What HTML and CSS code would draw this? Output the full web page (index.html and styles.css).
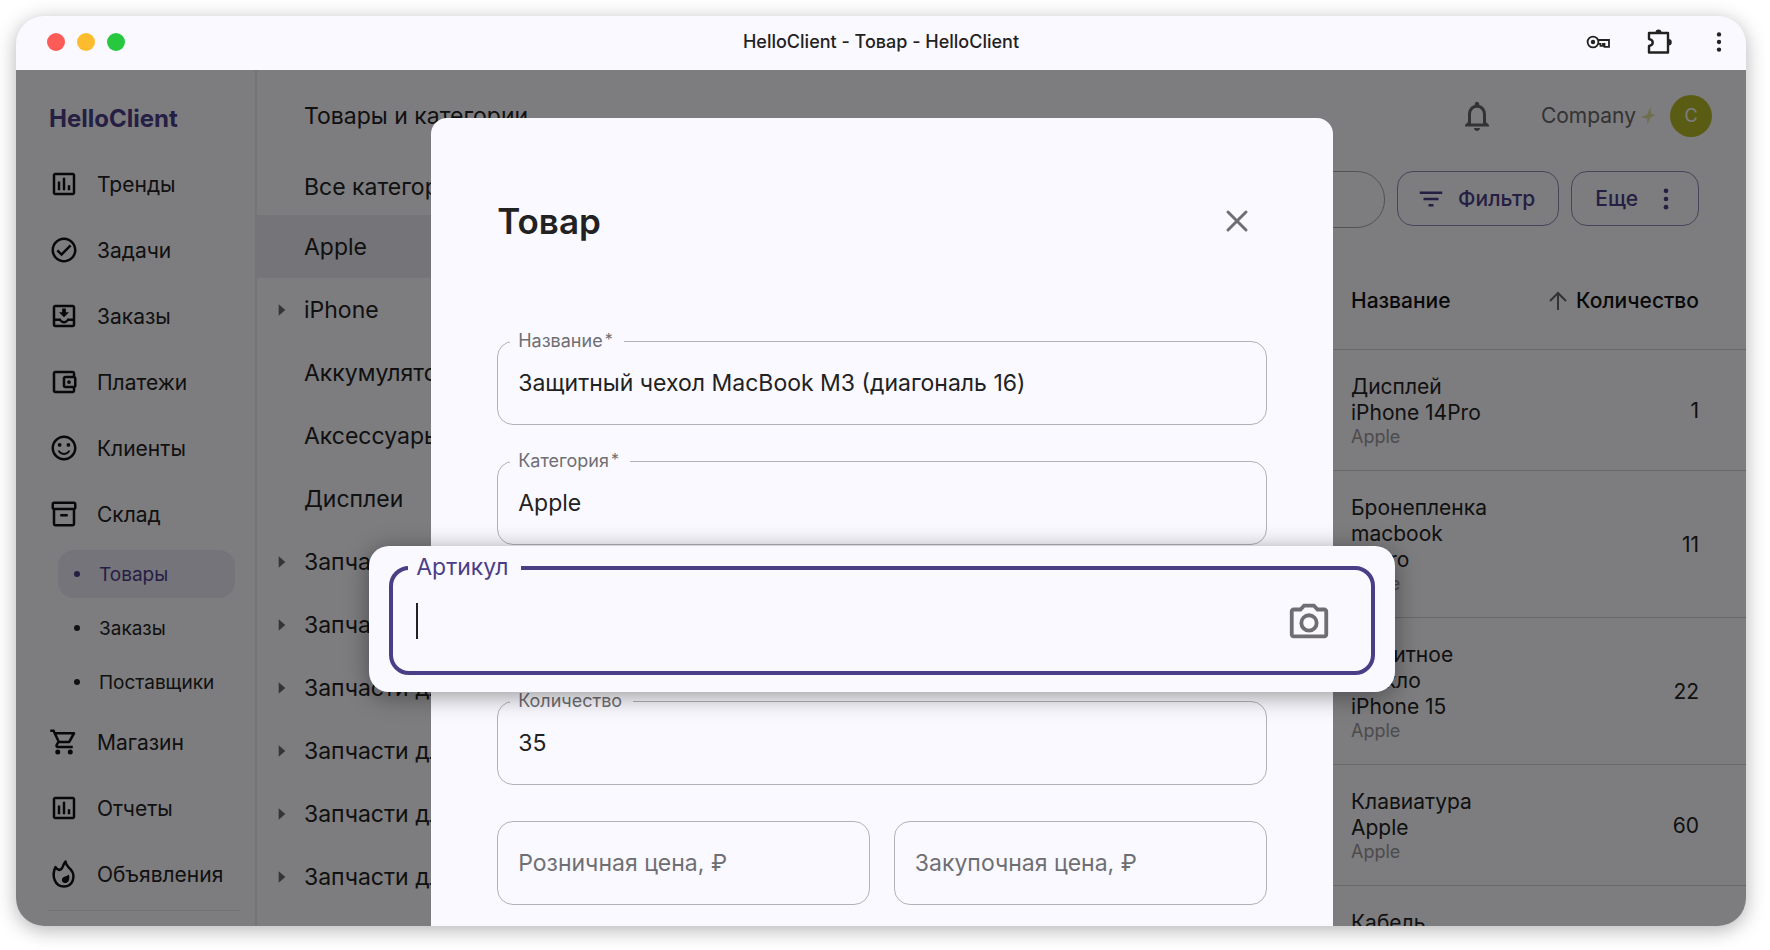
FILE: index.html
```html
<!DOCTYPE html>
<html lang="ru">

<head>
    <meta charset="UTF-8">
    <meta name="viewport" content="width=device-width, initial-scale=1.0">
    <title>HelloClient - Товар - HelloClient</title>
    <link rel="stylesheet" href="styles.css">
</head>

<body>
    <!-- общие иконки -->
    <svg width="0" height="0" class="sprite">
        <symbol id="i-chart" viewBox="0 0 24 24"><path d="M9 17H7v-7h2v7zm4 0h-2V7h2v10zm4 0h-2v-4h2v4zm2 2H5V5h14v14zm0-16H5c-1.1 0-2 .9-2 2v14c0 1.1.9 2 2 2h14c1.1 0 2-.9 2-2V5c0-1.1-.9-2-2-2z"/></symbol>
        <symbol id="i-arrow" viewBox="0 0 24 24"><path d="M8 5v14l8-7z"/></symbol>
        <symbol id="i-dots" viewBox="0 0 24 24"><circle cx="12" cy="5" r="2"/><circle cx="12" cy="12" r="2"/><circle cx="12" cy="19" r="2"/></symbol>
    </svg>

    <div class="window">
        <div class="titlebar">
            <div class="lights">
                <span class="light red"></span>
                <span class="light yellow"></span>
                <span class="light green"></span>
            </div>
            <div class="window-title">HelloClient - Товар - HelloClient</div>
            <div class="window-tools">
                <svg class="icon-24" viewBox="0 0 24 24" fill="none" stroke="currentColor" stroke-width="1.8"><circle cx="7" cy="12" r="5.400"/><circle cx="7" cy="12" r="2.200" fill="currentColor" stroke="none"/><path d="M12 10H23v6.800h-4.500v-2.900h-1.500v2h-2.500v-2H12"/></svg>
                <svg class="icon-30" viewBox="0 0 30 30"><path d="M5 6h19v19.500H5v-6.500c5-1 5-6 0-7z" fill="none" stroke="currentColor" stroke-width="2.400" stroke-linejoin="round"/><path d="M11.500 5.500a3 3 0 0 1 6 0zM24.500 12a3 3 0 0 1 0 6.500z" fill="currentColor"/></svg>
                <svg class="icon-26" fill="currentColor"><use href="#i-dots"/></svg>
            </div>
        </div>

        <div class="app">
            <nav class="sidebar">
                <div class="logo">HelloClient</div>
                <a href="#" class="nav-item"><svg class="icon"><use href="#i-chart"/></svg>Тренды</a>
                <a href="#" class="nav-item"><svg class="icon" viewBox="0 0 24 24"><path d="M12 2C6.500 2 2 6.500 2 12s4.500 10 10 10 10-4.500 10-10S17.500 2 12 2zm0 18c-4.400 0-8-3.600-8-8s3.600-8 8-8 8 3.600 8 8-3.600 8-8 8zm4.600-12.400L10 14.200l-2.600-2.600L6 13l4 4 8-8z"/></svg>Задачи</a>
                <a href="#" class="nav-item"><svg class="icon" viewBox="0 0 24 24"><path d="M16 9h-2.500V6h-3v3H8l4 4 4-4zm3-6H5c-1.100 0-2 .9-2 2v14c0 1.100.9 2 2 2h14c1.100 0 2-.9 2-2V5c0-1.100-.9-2-2-2zm0 16H5v-3h3.600c.7 1.200 2 2 3.400 2s2.700-.8 3.400-2H19v3zm0-5h-4.500c0 1.200-1.200 2-2.500 2s-2.500-.8-2.500-2H5V5h14v9z"/></svg>Заказы</a>
                <a href="#" class="nav-item"><svg class="icon" viewBox="0 0 24 24"><path d="M21 7.300V5c0-1.100-.9-2-2-2H5c-1.100 0-2 .9-2 2v14c0 1.100.9 2 2 2h14c1.100 0 2-.9 2-2v-2.300c.6-.3 1-1 1-1.700V9c0-.7-.4-1.400-1-1.700zM20 9v6h-7V9h7zM5 19V5h14v2h-6c-1.100 0-2 .9-2 2v6c0 1.100.9 2 2 2h6v2H5z"/><circle cx="16" cy="12" r="1.500"/></svg>Платежи</a>
                <a href="#" class="nav-item"><svg class="icon" viewBox="0 0 24 24"><path d="M12 2C6.500 2 2 6.500 2 12s4.500 10 10 10 10-4.500 10-10S17.500 2 12 2zm0 18c-4.400 0-8-3.600-8-8s3.600-8 8-8 8 3.600 8 8-3.600 8-8 8z"/><circle cx="8.500" cy="9.500" r="1.500"/><circle cx="15.500" cy="9.500" r="1.500"/><path d="M12 16c-1.500 0-2.800-.8-3.500-2H6.900c.8 2 2.800 3.500 5.100 3.500s4.300-1.500 5.100-3.500h-1.600c-.7 1.200-2 2-3.500 2z"/></svg>Клиенты</a>
                <a href="#" class="nav-item"><svg class="icon" viewBox="0 0 24 24"><path d="M20 2H4c-1 0-2 .9-2 2v3c0 .7.400 1.300 1 1.700V20c0 1.100 1.100 2 2 2h14c.9 0 2-.9 2-2V8.700c.6-.4 1-1 1-1.700V4c0-1.100-1-2-2-2zm-1 18H5V9h14v11zm1-13H4V4h16v3z"/><path d="M9 12h6v2H9z"/></svg>Склад</a>
                <a href="#" class="nav-sub active"><span>Товары</span></a>
                <a href="#" class="nav-sub"><span>Заказы</span></a>
                <a href="#" class="nav-sub"><span>Поставщики</span></a>
                <a href="#" class="nav-item"><svg class="icon" viewBox="0 0 24 24"><path d="M15.600 13c.7 0 1.400-.4 1.700-1l3.600-6.500c.4-.7-.1-1.500-.9-1.500H5.200l-.9-2H1v2h2l3.600 7.600L5.200 14c-.7 1.300.2 3 1.800 3h12v-2H7l1.100-2h7.500zM6.200 6h12.100l-2.800 5h-7L6.200 6z"/><circle cx="7" cy="20" r="2"/><circle cx="17" cy="20" r="2"/></svg>Магазин</a>
                <a href="#" class="nav-item"><svg class="icon"><use href="#i-chart"/></svg>Отчеты</a>
                <a href="#" class="nav-item"><svg class="icon" viewBox="0 0 24 24"><path d="M5.200 6.500C6.500 8.600 8.300 9 9.500 8.300c1.700-1 1.500-3.800 3.700-6.300.3 3.300 2.300 4.300 4.100 6.300 4.500 5.200 1.900 13.700-5.300 13.700S1.700 13.800 5.200 6.500z" fill="none" stroke="#111" stroke-width="2" stroke-linejoin="round"/><path d="M15.800 12.300c-1 1.600-3.500 1.200-4.800 2.600-1.500 1.700-.3 4.300 1.900 4.300 3 0 4.200-3.900 2.900-6.900z"/></svg>Объявления</a>
                <div class="nav-line"></div>
            </nav>

            <section class="categories">
                <h1 class="page-title">Товары и категории</h1>
                <ul class="tree">
                    <li class="tree-head">Все категории</li>
                    <li class="selected">Apple</li>
                    <li><svg class="tree-arrow"><use href="#i-arrow"/></svg>iPhone</li>
                    <li>Аккумуляторы</li>
                    <li>Аксессуары</li>
                    <li>Дисплеи</li>
                    <li><svg class="tree-arrow"><use href="#i-arrow"/></svg>Запчасти для</li>
                    <li><svg class="tree-arrow"><use href="#i-arrow"/></svg>Запчасти для</li>
                    <li><svg class="tree-arrow"><use href="#i-arrow"/></svg>Запчасти для</li>
                    <li><svg class="tree-arrow"><use href="#i-arrow"/></svg>Запчасти для</li>
                    <li><svg class="tree-arrow"><use href="#i-arrow"/></svg>Запчасти для</li>
                    <li><svg class="tree-arrow"><use href="#i-arrow"/></svg>Запчасти для</li>
                </ul>
            </section>

            <main class="stock">
                <header class="topbar">
                    <svg class="bell" viewBox="0 0 24 24"><path d="M12 22c1.100 0 2-.9 2-2h-4c0 1.100.9 2 2 2zm6-6v-5c0-3.100-1.600-5.600-4.500-6.300V4c0-.8-.7-1.500-1.500-1.500s-1.500.7-1.500 1.500v.7C7.600 5.400 6 7.900 6 11v5l-2 2v1h16v-1l-2-2zm-2 1H8v-6c0-2.500 1.500-4.500 4-4.500s4 2 4 4.500v6z"/></svg>
                    <span class="company">Company</span>
                    <svg class="spark" viewBox="0 0 20 24"><path d="M13 1l1 8 5 2-6 3-4 9v-8l-8-1 8-4z"/></svg>
                    <span class="avatar">C</span>
                </header>
                <div class="toolbar">
                    <input type="search" class="search" aria-label="Поиск">
                    <button class="tool-btn"><svg class="filter-icon" viewBox="0 0 24 24"><path d="M10 18h4v-2h-4v2zM3 6v2h18V6H3zm3 7h12v-2H6v2z"/></svg>Фильтр</button>
                    <button class="tool-btn more">Еще<svg class="more-icon"><use href="#i-dots"/></svg></button>
                </div>
                <table class="goods">
                    <thead>
                        <tr>
                            <th class="col-pic"></th>
                            <th class="col-name">Название</th>
                            <th class="col-qty"><span class="sort"><svg class="sort-icon" viewBox="0 0 24 24"><path d="M12 21V4M4 12l8-8 8 8" fill="none" stroke="currentColor" stroke-width="2"/></svg>Количество</span></th>
                        </tr>
                    </thead>
                    <tbody>
                        <tr><td></td><td>Дисплей<br>iPhone 14Pro<small>Apple</small></td><td class="qty">1</td></tr>
                        <tr><td></td><td>Бронепленка<br>macbook<br>M Pro<small>Apple</small></td><td class="qty">11</td></tr>
                        <tr><td></td><td>Защитное<br>стекло<br>iPhone 15<small>Apple</small></td><td class="qty">22</td></tr>
                        <tr><td></td><td>Клавиатура<br>Apple<small>Apple</small></td><td class="qty">60</td></tr>
                        <tr><td></td><td>Кабель</td><td></td></tr>
                    </tbody>
                </table>
            </main>

            <div class="backdrop"></div>

            <form class="modal">
                <div class="modal-head">
                    <h2>Товар</h2>
                    <button type="button" class="close" aria-label="Закрыть"><svg viewBox="0 0 24 24"><path d="M3 3l18 18M21 3L3 21" fill="none" stroke="currentColor" stroke-width="3" stroke-linecap="round"/></svg></button>
                </div>
                <div class="field">
                    <label for="name">Название<sup>*</sup></label>
                    <input id="name" type="text" value="Защитный чехол MacBook M3 (диагональ 16)">
                </div>
                <div class="field">
                    <label for="category">Категория<sup>*</sup></label>
                    <input id="category" type="text" value="Apple">
                </div>
                <div class="field-slot">
                    <div class="sku-card">
                        <div class="sku-field">
                            <label for="sku">Артикул</label>
                            <input id="sku" type="text">
                            <span class="caret"></span>
                            <button type="button" class="scan" aria-label="Сканировать"><svg viewBox="0 0 24 24"><path d="M20 5h-3.200L15 3H9L7.200 5H4c-1.100 0-2 .9-2 2v12c0 1.100.9 2 2 2h16c1.100 0 2-.9 2-2V7c0-1.100-.9-2-2-2zm0 14H4V7h4l1.900-2h4.200L16 7h4v12z"/><circle cx="12" cy="13" r="4" fill="none" stroke="currentColor" stroke-width="2"/></svg></button>
                        </div>
                    </div>
                </div>
                <div class="field">
                    <label for="amount">Количество</label>
                    <input id="amount" type="text" value="35">
                </div>
                <div class="field-row">
                    <div class="field"><input type="text" placeholder="Розничная цена, ₽" aria-label="Розничная цена"></div>
                    <div class="field"><input type="text" placeholder="Закупочная цена, ₽" aria-label="Закупочная цена"></div>
                </div>
            </form>
        </div>
    </div>
</body>

</html>
```

FILE: styles.css
```css
* {
    box-sizing: border-box;
}

body {
    margin: 0;
    padding: 16px 24px 24px 16px;
    background-color: #fff;
    font-family: Inter, "Liberation Sans", sans-serif;
    color: #222;
}

.sprite {
    position: absolute;
}

.window {
    display: flex;
    flex-direction: column;
    height: calc(100vh - 40px);
    border-radius: 28px;
    background-color: #faf9ff;
    box-shadow: 0 4px 20px rgba(0, 0, 0, 0.3);
    overflow: hidden;
}

/* заголовок окна */
.titlebar {
    display: grid;
    grid-template-columns: 1fr auto 1fr;
    align-items: center;
    flex: none;
    height: 54px;
    padding: 0 31px 3px;
}

.lights {
    display: flex;
    gap: 12px;
}

.light {
    width: 18px;
    height: 18px;
    border-radius: 50%;
}

.red {
    background-color: #fc5b57;
}

.yellow {
    background-color: #fdbc2e;
}

.green {
    background-color: #27c840;
}

.window-title {
    font-size: 18px;
    font-weight: 500;
}

.window-tools {
    display: flex;
    align-items: center;
    justify-content: flex-end;
    margin-right: -17px;
}

.icon-24 {
    width: 24px;
    height: 24px;
    margin-right: 34px;
}

.icon-30 {
    width: 30px;
    height: 30px;
    margin-right: 32px;
}

.icon-26 {
    width: 26px;
    height: 26px;
}

.app {
    position: relative;
    display: flex;
    flex: 1;
    min-height: 0;
}

/* меню */
.sidebar {
    flex: none;
    width: 241px;
    height: 100%;
    border-right: 2px solid #ebeaef;
    overflow: hidden;
}

.logo {
    height: 81px;
    padding: 33px 0 0 33px;
    font-size: 24px;
    line-height: 32px;
    font-weight: 700;
    color: #4a3f86;
}

.nav-item {
    display: flex;
    align-items: center;
    gap: 18px;
    height: 66px;
    padding-left: 33px;
    font-size: 21px;
    color: #222;
    text-decoration: none;
}

.icon {
    width: 30px;
    height: 30px;
    fill: #111;
}

.nav-sub {
    display: flex;
    height: 54px;
    padding: 3px 20px 3px 42px;
    font-size: 19px;
    color: #222;
    text-decoration: none;
}

.nav-sub span {
    display: flex;
    align-items: center;
    gap: 19px;
    flex: 1;
    padding-left: 16px;
    border-radius: 16px;
}

.nav-sub span::before {
    content: "";
    width: 6px;
    height: 6px;
    border-radius: 50%;
    background-color: currentColor;
}

.nav-sub.active span {
    background-color: #ebe8f4;
    color: #4a3f86;
}

.nav-line {
    height: 1px;
    margin: 3px 15px 0 32px;
    background-color: #e6e5ea;
}

/* категории */
.categories {
    flex: none;
    width: 400px;
    height: 100%;
    overflow: hidden;
}

.page-title {
    margin: 0;
    padding: 30px 0 27px 47px;
    font-size: 23px;
    line-height: 32px;
    font-weight: 400;
}

.tree {
    margin: 0;
    padding: 0;
    list-style: none;
    font-size: 23px;
}

.tree li {
    position: relative;
    display: flex;
    align-items: center;
    height: 63px;
    padding-left: 47px;
}

.tree .tree-head {
    height: 56px;
}

.tree .selected {
    background-color: #eae8f0;
}

.tree-arrow {
    position: absolute;
    left: 13px;
    width: 24px;
    height: 20px;
    fill: #6a6a6e;
}

/* товары */
.stock {
    flex: 1;
    min-width: 0;
}

.topbar {
    display: flex;
    align-items: center;
    justify-content: flex-end;
    height: 91px;
    padding-right: 34px;
}

.bell {
    width: 36px;
    height: 36px;
    margin-right: 46px;
    fill: #666;
}

.company {
    font-size: 21px;
    color: #666;
}

.spark {
    width: 16px;
    height: 20px;
    margin: 0 14px 0 4px;
    fill: #dddf98;
}

.avatar {
    display: flex;
    align-items: center;
    justify-content: center;
    width: 42px;
    height: 42px;
    border-radius: 50%;
    background-color: #b4b828;
    color: #fbfaff;
    font-size: 18px;
}

.toolbar {
    display: flex;
    align-items: flex-start;
    gap: 12px;
    height: 81px;
    padding: 10px 47px 0 48px;
}

.search {
    flex: 1;
    min-width: 0;
    height: 57px;
    border: 1px solid #a5a4aa;
    border-radius: 28px;
    background: none;
}

.tool-btn {
    display: flex;
    align-items: center;
    gap: 12px;
    height: 55px;
    padding: 0 23px 0 18px;
    border: 1px solid #8f89b6;
    border-radius: 16px;
    background: none;
    font-family: inherit;
    font-size: 21px;
    font-weight: 500;
    color: #4a3f86;
}

.tool-btn.more {
    gap: 14px;
    padding: 0 18px 0 23px;
}

.filter-icon {
    width: 30px;
    height: 30px;
    fill: #4a3f86;
}

.more-icon {
    width: 28px;
    height: 28px;
    fill: #4a3f86;
}

.goods {
    width: 100%;
    table-layout: fixed;
    border-collapse: collapse;
    font-size: 21px;
    line-height: 26px;
}

.goods th {
    height: 107px;
    padding: 11px 0 0;
    font-weight: 500;
    text-align: left;
    color: #111;
}

.goods td {
    padding: 24px 0 22px;
    border-top: 1px solid #d0cfd4;
}

.goods small {
    display: block;
    font-size: 18px;
    line-height: 22px;
    color: #98979c;
}

.col-name {
    width: 150px;
}

.col-qty {
    width: 245px;
}

.sort {
    display: flex;
    align-items: center;
    justify-content: flex-end;
    gap: 6px;
    padding-right: 47px;
}

.sort-icon {
    width: 24px;
    height: 24px;
    color: #666;
}

.goods .qty {
    padding-right: 47px;
    text-align: right;
}

.backdrop {
    position: absolute;
    inset: 0;
    background-color: rgba(0, 0, 0, 0.5);
}

/* окно товара */
.modal {
    position: absolute;
    top: 48px;
    bottom: 0;
    left: 24%;
    width: 52.1%;
    padding: 79px 66px 0;
    border-radius: 16px 16px 0 0;
    background-color: #faf9ff;
}

.modal-head {
    display: flex;
    align-items: center;
    justify-content: space-between;
    margin-bottom: 96px;
    padding-right: 15px;
}

.modal-head h2 {
    margin: 0;
    font-size: 35px;
    line-height: 48px;
    font-weight: 600;
}

.close {
    width: 30px;
    height: 30px;
    padding: 3px;
    border: none;
    background: none;
    color: #6f6f73;
}

.close svg,
.scan svg {
    display: block;
    width: 100%;
    height: 100%;
}

.field {
    position: relative;
    flex: 1;
    margin-bottom: 36px;
}

.field label {
    position: absolute;
    top: -12px;
    left: 13px;
    padding: 0 11px 0 8px;
    background-color: #faf9ff;
    font-size: 18px;
    line-height: 24px;
    color: #6f6f73;
}

.field sup {
    margin-left: 2px;
    line-height: 0;
    font-size: 16px;
    vertical-align: 2px;
}

.field input {
    display: block;
    width: 100%;
    height: 84px;
    padding: 0 20px;
    border: 1px solid #b3b2b8;
    border-radius: 16px;
    background: none;
    font-family: inherit;
    font-size: 23px;
    color: #222;
}

.field input::placeholder {
    color: #6f6f73;
    opacity: 1;
}

.field-row {
    display: flex;
    gap: 24px;
}

.field-slot {
    position: relative;
    height: 84px;
    margin-bottom: 36px;
}

/* выделенное поле поверх формы */
.sku-card {
    position: absolute;
    z-index: 1;
    top: -35px;
    left: -128px;
    right: -128px;
    padding: 20px 20px 17px;
    border-radius: 20px;
    background-color: #faf9ff;
    box-shadow: 0 4px 24px rgba(0, 0, 0, 0.4);
}

.sku-field {
    position: relative;
    display: flex;
    align-items: center;
    height: 109px;
    padding: 0 39px 0 24px;
    border: 4px solid #4a3f86;
    border-radius: 20px;
}

.sku-field label {
    position: absolute;
    top: -18px;
    left: 15px;
    padding: 0 13px 0 8px;
    background-color: #faf9ff;
    font-size: 23px;
    line-height: 30px;
    color: #4a3f86;
}

.sku-field input {
    flex: 1;
    height: 60px;
    padding: 0;
    border: none;
    outline: none;
    background: none;
    font-family: inherit;
    font-size: 30px;
}

.caret {
    position: absolute;
    left: 23px;
    width: 2px;
    height: 36px;
    background-color: #222;
}

.scan {
    width: 46px;
    height: 46px;
    padding: 0;
    border: none;
    background: none;
    color: #6f6f73;
}

.scan svg {
    fill: #6f6f73;
}
```
